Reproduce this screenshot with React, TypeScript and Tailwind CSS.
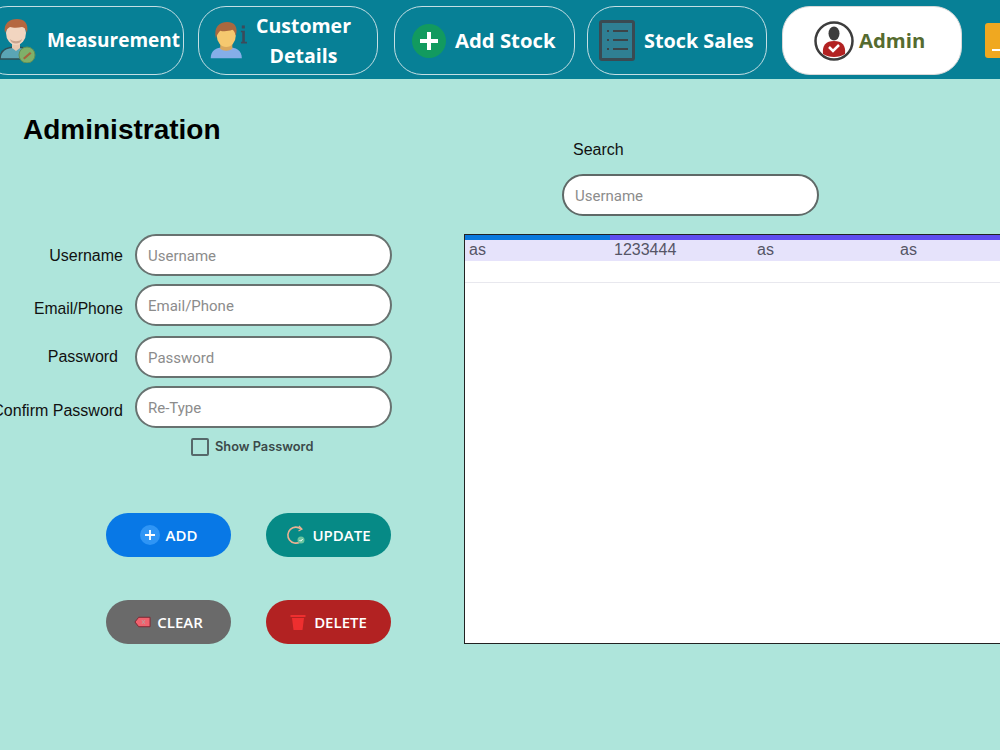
import React from 'react';

const MeasurementIcon = () => (
  <svg viewBox="0 0 36 44" className="w-[36px] h-[44px] shrink-0">
    <path d="M0 40c0-8 6-12 16-12s16 4 16 12z" fill="#5aa5b5" stroke="#2f4f55" strokeWidth="1.500" />
    <path d="M12 22h8v7l-4 3-4-3z" fill="#e8c8b0" />
    <ellipse cx="16" cy="14" rx="10" ry="12" fill="#f2d5c0" />
    <path d="M5 14C3 4 10 0 17 0s12 4 10 14c-1-4-3-6-5-6-4 1-9 1-12 0-2 1-4 3-5 6z" fill="#b5673f" />
    <path d="M10 20c3 3 9 3 12 0-1 6-11 6-12 0z" fill="#c9a48e" />
    <circle cx="27" cy="36" r="8" fill="#7fb069" stroke="#5f8f58" strokeWidth="1" />
    <path d="M23 39l7-6 1.500 1.500-7 6z" fill="#a5633c" />
  </svg>
);

const CustomerIcon = () => (
  <svg viewBox="0 0 44 44" className="w-[38px] h-[38px] shrink-0">
    <path d="M2 42c0-9 6-13 18-13s18 4 18 13z" fill="#85aee8" />
    <path d="M13 25h14v6c-3 3-11 3-14 0z" fill="#d9a75c" />
    <ellipse cx="20" cy="16" rx="11" ry="13" fill="#f5c86f" />
    <path d="M8 19C5 6 12 0 21 0c9 0 13 6 10 16-1-4-2-6-4-7-5 2-11 2-14 1-2 2-4 5-5 9z" fill="#a9683f" />
    <rect x="38" y="4" width="3.500" height="3.500" fill="#3c4a5a" />
    <path d="M37 10h4.500v13H44v2h-7v-2h1.500V12H37z" fill="#3c4a5a" />
  </svg>
);

const AddStockIcon = () => (
  <svg viewBox="0 0 34 34" className="w-[34px] h-[34px] shrink-0">
    <circle cx="17" cy="17" r="17" fill="#129a5f" />
    <path d="M17 8v18M8 17h18" stroke="#fff" strokeWidth="4" />
  </svg>
);

const StockSalesIcon = () => (
  <svg viewBox="0 0 36 42" className="w-[36px] h-[42px] shrink-0">
    <rect x="1.500" y="1.500" width="33" height="38" rx="1.500" fill="#2f7f93" stroke="#3a4a52" strokeWidth="3" />
    <path d="M14 11h15M14 20h15M14 29h15" stroke="#3c4448" strokeWidth="2" />
    <path d="M8 11h2M8 20h2M8 29h2" stroke="#3c4448" strokeWidth="2" />
  </svg>
);

const AdminIcon = () => (
  <svg viewBox="0 0 40 40" className="w-[40px] h-[40px] shrink-0">
    <circle cx="20" cy="20" r="18.500" fill="#fff" stroke="#3d3d3d" strokeWidth="2.500" />
    <ellipse cx="20" cy="12.500" rx="5.500" ry="7" fill="#3d3d3d" />
    <path d="M9 33c-1-9 3-13 11-13s12 4 11 13c-6 4-16 4-22 0z" fill="#b22222" />
    <path d="M15 26l4 4 6-6" fill="none" stroke="#fff" strokeWidth="2.500" />
  </svg>
);

const NavButton = ({ icon, label, className }: { icon: React.ReactNode; label: React.ReactNode; className: string }) => (
  <div className={`h-[69px] shrink-0 flex items-center rounded-[28px] border border-[#c4dfe4] text-white font-bold ${className}`}>
    {icon}
    {label}
  </div>
);

const FormRow = ({ label, placeholder, rowClass, labelClass }: { label: string; placeholder: string; rowClass: string; labelClass?: string }) => (
  <div className={`flex items-center ${rowClass}`}>
    <div className={`w-[123px] shrink-0 flex justify-end whitespace-nowrap text-[#111] font-['Liberation_Sans',sans-serif] ${labelClass ?? ''}`}>
      {label}
    </div>
    <input
      placeholder={placeholder}
      className="ml-[12px] w-[257px] h-[42px] rounded-[21px] border-2 border-[#687270] bg-white px-[11px] pt-[1px] text-[15px] font-['Roboto',sans-serif] outline-none placeholder:text-[#8c8c8c]"
    />
  </div>
);

const ActionButton = ({ icon, label, className }: { icon: React.ReactNode; label: string; className: string }) => (
  <button className={`w-[125px] h-[44px] rounded-[22px] flex items-center justify-center gap-[6px] text-white text-[15px] font-semibold ${className}`}>
    {icon}
    {label}
  </button>
);

export default function App() {
  return (
    <div className="w-[1000px] h-[750px] overflow-hidden bg-[#aee5db] font-['Open_Sans',sans-serif]">
      <nav className="h-[79px] pt-[2px] bg-[#078096] flex items-center overflow-hidden">
        <NavButton
          className="w-[204px] -ml-[20px] pl-[19px] gap-[11px] text-[19px]"
          icon={<MeasurementIcon />}
          label="Measurement"
        />
        <NavButton
          className="w-[180px] ml-[14px] pl-[10px] text-[19.500px]"
          icon={<CustomerIcon />}
          label={<span className="flex-1 text-center leading-[30px] pr-[17px] pt-[1px]">Customer<br />Details</span>}
        />
        <NavButton
          className="w-[181px] ml-[16px] pl-[17px] gap-[9px] text-[20.300px]"
          icon={<AddStockIcon />}
          label="Add Stock"
        />
        <NavButton
          className="w-[180px] ml-[12px] pl-[11px] gap-[9px] text-[19.800px]"
          icon={<StockSalesIcon />}
          label="Stock Sales"
        />
        <NavButton
          className="w-[180px] ml-[15px] pl-[31px] gap-[5px] text-[20.300px] !bg-white !text-[#556b2f] border-[#d8d8d8]"
          icon={<AdminIcon />}
          label="Admin"
        />
        <div className="w-[40px] h-[35px] ml-[23px] shrink-0 rounded-[3px] bg-[#f0a820] flex items-end pl-[7px] pb-[7px]">
          <div className="w-[12px] h-[2px] bg-white" />
        </div>
      </nav>

      <main className="flex">
        <section className="w-[464px] shrink-0">
          <h1 className="mt-[34px] ml-[23px] text-[28px] leading-[34px] font-bold text-black font-['Liberation_Sans',sans-serif]">
            Administration
          </h1>
          <div className="mt-[87px]">
            <FormRow label="Username" placeholder="Username" rowClass="" labelClass="translate-y-[1px]" />
            <FormRow label="Email/Phone" placeholder="Email/Phone" rowClass="mt-[8px]" labelClass="translate-y-[4px] text-[15.700px]" />
            <FormRow label="Password" placeholder="Password" rowClass="mt-[10px]" labelClass="pr-[5px]" />
            <FormRow label="Confirm Password" placeholder="Re-Type" rowClass="mt-[8px]" labelClass="translate-y-[4px]" />
          </div>
          <label className="mt-[9px] ml-[191px] flex items-center gap-[6px] text-[12.800px] font-semibold text-[#3c4a4a] font-['Inter',sans-serif]">
            <span className="w-[18px] h-[18px] rounded-[2px] border-2 border-[#56686a]" />
            Show Password
          </label>
          <div className="mt-[57px] ml-[106px] grid grid-cols-[125px_125px] gap-x-[35px] gap-y-[43px]">
            <ActionButton
              className="bg-[#0878e6]"
              label="ADD"
              icon={
                <svg viewBox="0 0 20 20" className="w-[20px] h-[20px]">
                  <circle cx="10" cy="10" r="10" fill="#2f95f5" />
                  <path d="M10 5v10M5 10h10" stroke="#fff" strokeWidth="1.800" />
                </svg>
              }
            />
            <ActionButton
              className="bg-[#068a86]"
              label="UPDATE"
              icon={
                <svg viewBox="0 0 20 20" className="w-[20px] h-[20px]">
                  <path d="M15 4A8 8 0 1 0 14 17" fill="none" stroke="#eab193" strokeWidth="1.600" />
                  <path d="M13 1l3 3-3.500 2" fill="none" stroke="#eab193" strokeWidth="1.200" />
                  <circle cx="15" cy="15" r="3.500" fill="#6cc5a0" />
                  <path d="M13.500 15l1.200 1.200 2-2.200" fill="none" stroke="#fff" strokeWidth="1" />
                </svg>
              }
            />
            <ActionButton
              className="bg-[#6a6a6a]"
              label="CLEAR"
              icon={
                <svg viewBox="0 0 18 12" className="w-[17px] h-[12px]">
                  <path d="M5 1h12v10H5L1 6z" fill="#f0626e" stroke="#7a2530" strokeWidth="1" />
                  <path d="M8.500 4l3 4M11.500 4l-3 4" stroke="#b5a0a0" strokeWidth="1" />
                </svg>
              }
            />
            <ActionButton
              className="bg-[#b22222] gap-[8px]"
              label="DELETE"
              icon={
                <svg viewBox="0 0 16 16" className="w-[16px] h-[16px]">
                  <rect x="0.500" y="1" width="15" height="2" fill="#ee2f2f" />
                  <path d="M2 4h12l-1.500 12h-9z" fill="#ee2f2f" />
                </svg>
              }
            />
          </div>
        </section>

        <section className="flex-1 min-w-0">
          <div className="mt-[62px] ml-[109px] text-[16px] leading-[18px] text-[#111] font-['Liberation_Sans',sans-serif]">Search</div>
          <input
            placeholder="Username"
            className="block mt-[15px] ml-[98px] w-[257px] h-[42px] rounded-[21px] border-2 border-[#5f6967] bg-white px-[11px] pt-[1px] text-[15px] font-['Roboto',sans-serif] outline-none placeholder:text-[#8c8c8c]"
          />
          <div className="mt-[18px] w-[560px] h-[410px] border border-[#222] bg-white font-['Liberation_Sans',sans-serif]">
            <div className="h-[5px] flex">
              <div className="w-[145px] bg-[#0a78dc]" />
              <div className="flex-1 bg-[#5f4cf0]" />
            </div>
            <div className="h-[21px] bg-[#e6e3fb] grid grid-cols-[145px_143px_143px_129px] items-center pl-[4px] pb-[1px] text-[16px] leading-[18px] text-[#555566]">
              <span>as</span>
              <span>1233444</span>
              <span>as</span>
              <span>as</span>
            </div>
            <div className="h-[22px] border-b border-[#e8e8ee]" />
          </div>
        </section>
      </main>
    </div>
  );
}
